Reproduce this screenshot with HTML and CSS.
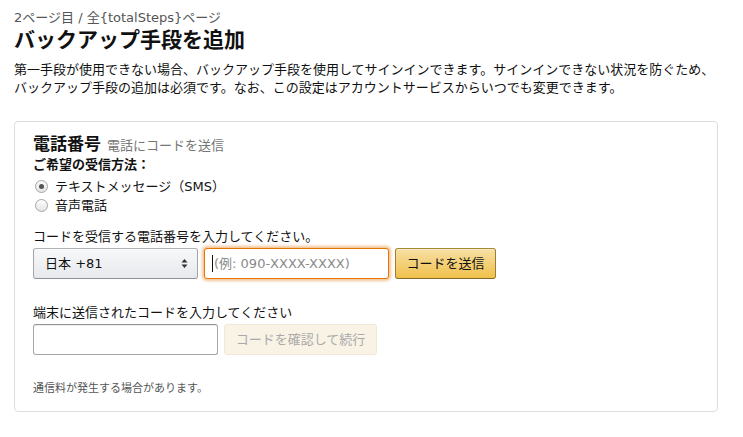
FILE: index.html
```html
<!DOCTYPE html>
<html lang="ja">
<head>
<meta charset="utf-8">
<title>バックアップ手段を追加</title>
<link rel="stylesheet" href="styles.css">
</head>
<body>
<div class="page">
  <div class="step">2ページ目 / 全{totalSteps}ページ</div>
  <h1 class="title">バックアップ手段を追加</h1>
  <p class="desc">第一手段が使用できない場合、バックアップ手段を使用してサインインできます。サインインできない状況を防ぐため、バックアップ手段の追加は必須です。なお、この設定はアカウントサービスからいつでも変更できます。</p>

  <div class="box">
    <div class="box-head"><span class="box-title">電話番号</span><span class="box-sub">電話にコードを送信</span></div>
    <div class="method-label">ご希望の受信方法：</div>
    <div class="radio-row"><span class="radio checked"></span><span>テキストメッセージ（SMS）</span></div>
    <div class="radio-row"><span class="radio"></span><span>音声電話</span></div>

    <div class="field-label">コードを受信する電話番号を入力してください。</div>
    <div class="controls">
      <div class="select"><span class="select-text">日本 +81</span>
        <svg class="select-arrows" width="7" height="11" viewBox="0 0 7 11"><path d="M3.5 1 L6.5 4.5 L0.5 4.5 Z M3.5 10 L6.5 6.5 L0.5 6.5 Z" fill="#333"/></svg>
      </div>
      <div class="input focus"><span class="caret"></span><span class="placeholder">(例: 090-XXXX-XXXX)</span></div>
      <div class="btn primary">コードを送信</div>
    </div>

    <div class="field-label second">端末に送信されたコードを入力してください</div>
    <div class="controls">
      <div class="input plain"></div>
      <div class="btn disabled">コードを確認して続行</div>
    </div>

    <div class="note">通信料が発生する場合があります。</div>
  </div>
</div>
</body>
</html>
```

FILE: styles.css
```css
* { box-sizing: border-box; }
html, body { margin: 0; padding: 0; background: #fff; }
body {
  font-family: "DejaVu Sans", "Noto Sans CJK JP", sans-serif;
  font-size: 13px;
  line-height: 19px;
  color: #111;
}
.page {
  width: 704px;
  margin-left: 14px;
  padding-top: 9px;
}
.step {
  color: #555;
  line-height: 18px;
}
.title {
  margin: 1px 0 0;
  font-size: 21px;
  line-height: 24px;
  font-weight: 700;
  color: #111;
}
.desc {
  margin: 9px 0 0;
  line-height: 18px;
  color: #111;
}
.box {
  margin-top: 24px;
  border: 1px solid #ddd;
  border-radius: 4px;
  padding: 12px 18px 15px;
}
.box-head {
  display: flex;
  align-items: baseline;
  gap: 6px;
  line-height: 20px;
}
.box-title {
  font-size: 17px;
  font-weight: 700;
}
.box-sub {
  color: #767676;
  font-size: 13px;
}
.method-label {
  font-weight: 700;
  line-height: 18px;
}
.radio-row {
  display: flex;
  align-items: center;
  gap: 7px;
  padding-left: 2px;
  line-height: 19px;
}
.method-label + .radio-row { margin-top: 3px; }
.radio {
  width: 13px;
  height: 13px;
  border-radius: 50%;
  border: 1px solid #a6a6a6;
  background: linear-gradient(#fdfdfd, #e4e4e4);
  display: flex;
  align-items: center;
  justify-content: center;
}
.radio.checked::after {
  content: "";
  width: 5px;
  height: 5px;
  border-radius: 50%;
  background: #555;
}
.field-label {
  margin-top: 12px;
  line-height: 19px;
}
.field-label.second { margin-top: 24px; }
.controls {
  display: flex;
  gap: 6px;
  margin-top: 2px;
  height: 31px;
}
.select {
  width: 165px;
  border: 1px solid #adb1b8;
  border-color: #adb1b8 #a2a6ac #8d9096;
  border-radius: 3px;
  background: linear-gradient(#f7f8fa, #e7e9ec);
  display: flex;
  align-items: center;
  justify-content: space-between;
  padding: 0 9px 0 11px;
  box-shadow: 0 1px 0 rgba(255,255,255,.6) inset;
}
.select-arrows { display: block; }
.input {
  width: 185px;
  border-radius: 3px;
  background: #fff;
  display: flex;
  align-items: center;
  padding-left: 7px;
}
.input.focus {
  border: 1px solid #e77600;
  box-shadow: 0 0 3px 2px rgba(228,121,17,.45);
}
.input.plain {
  border: 1px solid #a6a6a6;
  border-top-color: #949494;
  box-shadow: 0 1px 0 rgba(255,255,255,.5), 0 1px 0 rgba(0,0,0,.07) inset;
}
.caret {
  width: 1px;
  height: 17px;
  background: #111;
  margin-right: 1px;
}
.placeholder { color: #8a8a8a; }
.btn {
  border-radius: 3px;
  display: flex;
  align-items: center;
  justify-content: center;
}
.btn.primary {
  width: 101px;
  border: 1px solid #a88734;
  border-color: #a88734 #9c7e31 #846a29;
  background: linear-gradient(#f7dfa5, #f0c14b);
  color: #111;
  box-shadow: 0 1px 0 rgba(255,255,255,.4) inset;
}
.btn.disabled {
  width: 153px;
  border: 1px solid #f1e9d6;
  background: #f9f3e5;
  color: #aaa;
}
.note {
  margin-top: 26px;
  font-size: 11px;
  line-height: 15px;
  color: #555;
}
```
